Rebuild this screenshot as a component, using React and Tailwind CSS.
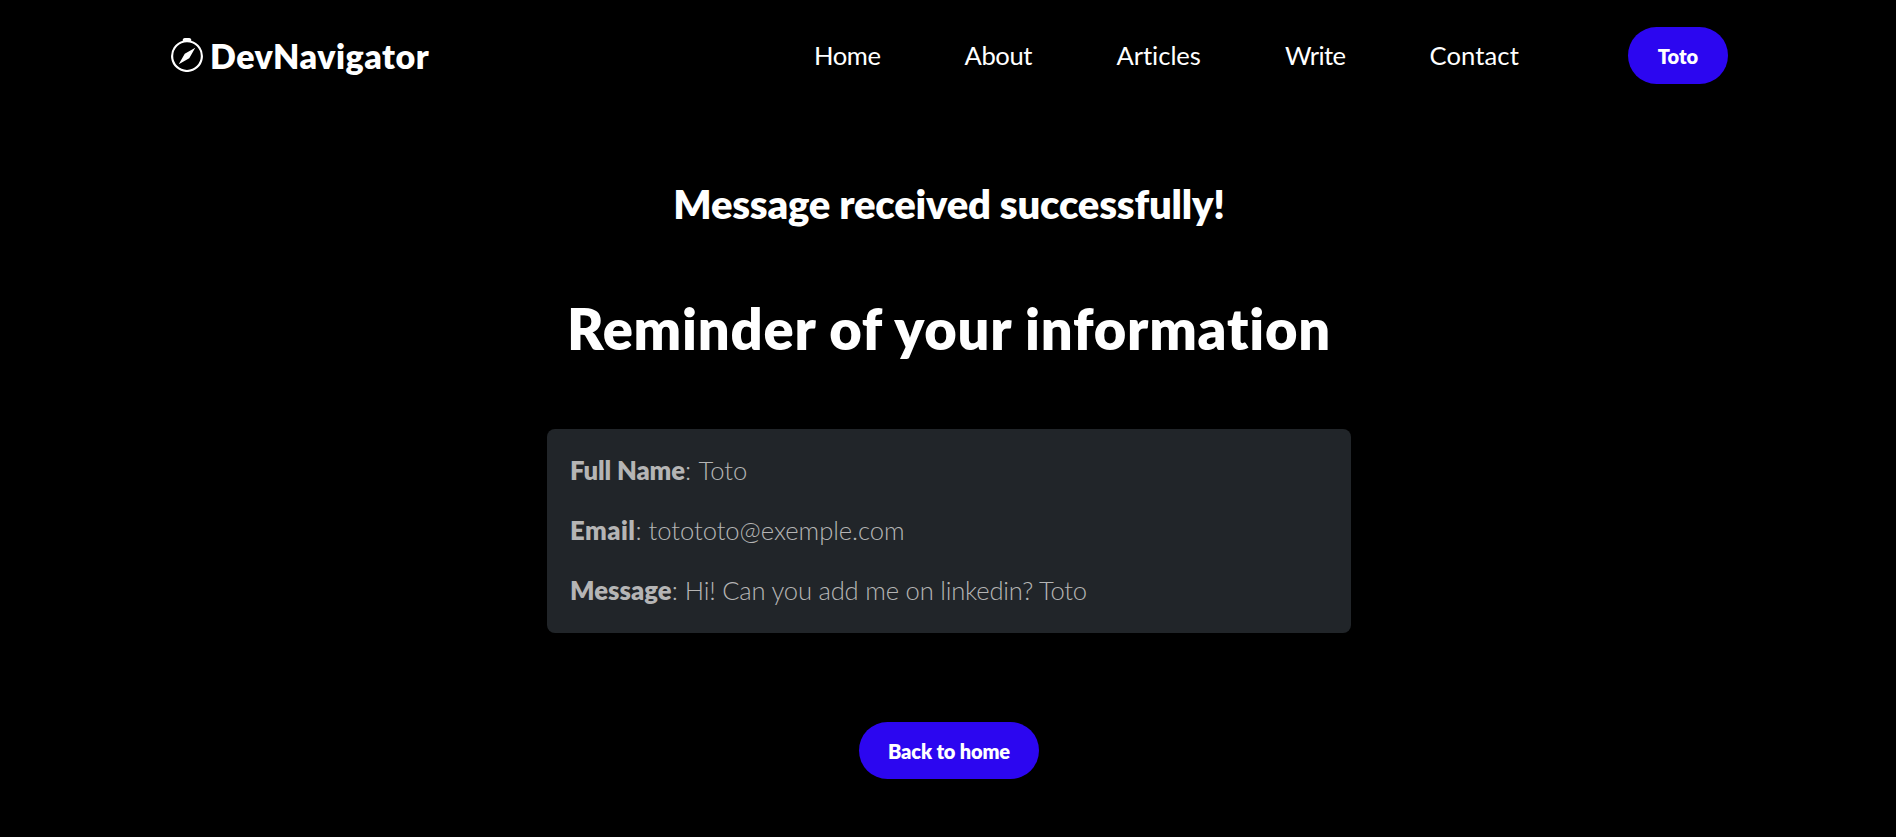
import React from 'react';
import { BsCompass } from 'react-icons/bs';

const links = [
  { label: 'Home', style: 'w-[150.5px] tracking-[-0.4px]' },
  { label: 'About', style: 'w-[152px] tracking-[-0.4px]' },
  { label: 'Articles', style: 'w-[168.5px] tracking-[-0.05px]' },
  { label: 'Write', style: 'w-[144.5px] tracking-[-0.6px]' },
  { label: 'Contact', style: 'w-[198.5px] tracking-[0.1px]' },
];

const details = [
  { label: 'Full Name', value: 'Toto', labelStyle: 'tracking-[-0.1px]', valueStyle: 'ml-[0.5px]' },
  { label: 'Email', value: 'totototo@exemple.com', labelStyle: 'tracking-[0.5px]', valueStyle: 'tracking-[-0.05px]' },
  { label: 'Message', value: 'Hi! Can you add me on linkedin? Toto', labelStyle: 'tracking-[0.05px]', valueStyle: 'tracking-[-0.2px]' },
];

const Header = () => {
  return (
    <header className="flex items-center h-[57px] mt-[27px] pl-[170px] pr-[168px]">
      <a href="#" className="flex items-center gap-[6px] text-[34px] font-extrabold tracking-[0.5px] whitespace-nowrap">
        <BsCompass className="h-[34px] w-[34px] mb-[2px]" />
        <span>DevNavigator</span>
      </a>
      <nav className="flex ml-auto text-[25.6px]">
        {links.map((link) => (
          <a key={link.label} href="#" className={link.style}>
            <span>{link.label}</span>
          </a>
        ))}
      </nav>
      <button className="w-[100px] h-[57px] rounded-[28.5px] bg-[#2c06f0] text-[20px] font-extrabold">
        Toto
      </button>
    </header>
  );
};

const App = () => {
  return (
    <div className="h-[837px] overflow-hidden bg-black text-white font-['Lato',sans-serif] [font-variant-ligatures:none]">
      <Header />
      <main className="flex flex-col items-center pl-[2px]">
        <h3 className="mt-[95px] h-[50px] leading-[50px] text-[40px] font-extrabold tracking-[-0.2px]">Message received successfully!</h3>
        <h1 className="mt-[65px] h-[70px] leading-[70px] text-[56px] font-extrabold tracking-[0.8px]">Reminder of your information</h1>
        <div className="mt-[65px] w-[804px] h-[204px] rounded-[8px] bg-[#212529] pl-[23px] pt-[11px] text-[25.6px] font-light text-[#b5b5b5]">
          {details.map((item) => (
            <p key={item.label} className="h-[60px] leading-[60px]">
              <strong className={`font-extrabold ${item.labelStyle}`}>{item.label}</strong>:{' '}
              <span className={item.valueStyle}>{item.value}</span>
            </p>
          ))}
        </div>
        <button className="mt-[89px] w-[180px] h-[57px] rounded-full bg-[#2c06f0] text-[20px] font-extrabold tracking-[-0.15px]">
          Back to home
        </button>
      </main>
    </div>
  );
};

export default App;
